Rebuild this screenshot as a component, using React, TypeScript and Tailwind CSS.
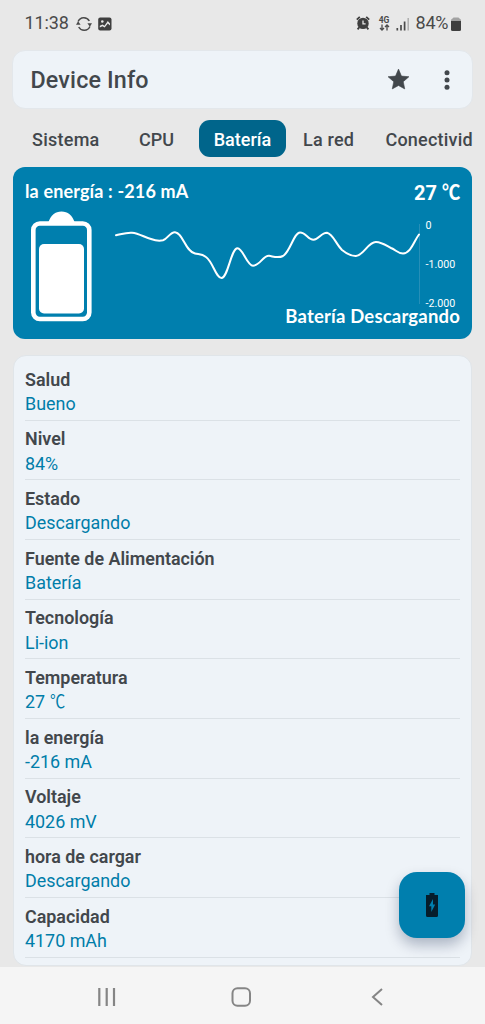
import React from "react";

const rows: [string, string][] = [
  ["Salud", "Bueno"],
  ["Nivel", "84%"],
  ["Estado", "Descargando"],
  ["Fuente de Alimentación", "Batería"],
  ["Tecnología", "Li-ion"],
  ["Temperatura", "27 ℃"],
  ["la energía", "-216 mA"],
  ["Voltaje", "4026 mV"],
  ["hora de cargar", "Descargando"],
  ["Capacidad", "4170 mAh"],
];

function StatusBar() {
  return (
    <div className="flex h-[46px] shrink-0 items-center pl-[24.500px] pr-[24px] text-[18px] text-[#4a4a4a]">
      <span className="mb-px w-[51px] whitespace-nowrap tracking-[-0.100px]">11:38</span>
      <svg className="mt-px h-4 w-4" viewBox="0 0 16 16" fill="none" stroke="#4a4a4a" strokeWidth="1.5">
        <path d="M2.100 5.500A6.200 6.200 0 0 1 13.300 5M13.900 10.500A6.200 6.200 0 0 1 2.700 11" />
        <path d="M0 8.800h4.600L2.100 5.200zM11.400 7.200H16L13.900 10.800z" fill="#4a4a4a" stroke="none" />
      </svg>
      <svg className="ml-[6px] mt-px h-[14px] w-[14px]" viewBox="0 0 14 14">
        <rect x="0.200" y="0.500" width="13.300" height="13" rx="2" fill="#3f3f3f" />
        <circle cx="4.300" cy="4.500" r="1.300" fill="#e8e8e8" />
        <path d="M1.800 8.800l2.700-1.300 2 1.200 3.300-4.700L12 6.500v2L9.800 6.500 6.700 10.500 4.400 9.200 1.800 10.600z" fill="#e8e8e8" />
      </svg>
      <div className="flex-1" />
      <svg className="mb-px h-[14px] w-[14px]" viewBox="0 0 14 14">
        <circle cx="7" cy="7.400" r="5.700" fill="#3f3f3f" />
        <path d="M0.800 3.600l3-2.800M13.200 3.600l-3-2.800M3.200 11.400L1.600 13.400M10.800 11.400l1.600 2" stroke="#3f3f3f" strokeWidth="1.800" />
        <path d="M7 4.500v3.300h2.600" fill="none" stroke="#e8e8e8" strokeWidth="1.300" />
      </svg>
      <div className="ml-[8px] flex w-[12px] flex-col items-center">
        <span className="text-[8.500px] font-bold leading-[8px]">4G</span>
        <svg className="h-[7px] w-[11px]" viewBox="0 0 11 7" fill="none" stroke="#4a4a4a" strokeWidth="1.300">
          <path d="M3 0.500v5M1 4l2 2 2-2M8 6.500v-5M6 3l2-2 2 2" />
        </svg>
      </div>
      <svg className="ml-[6px] mt-px h-[14px] w-[14px]" viewBox="0 0 14 14">
        <path d="M1.300 11v2.500M5 8v5.500M8.600 4.500v9" stroke="#4a4a4a" strokeWidth="1.700" />
        <path d="M12.200 1v12.500" stroke="#adadad" strokeWidth="1.500" />
      </svg>
      <span className="mb-px ml-[5.500px] w-[35.500px] whitespace-nowrap tracking-[-0.200px]">84%</span>
      <svg className="mt-px h-[14px] w-[10px]" viewBox="0 0 10 14">
        <path d="M0 3.500Q0 2 1.500 1.500L2.500 .5H7.500L8.500 1.500Q10 2 10 3.500V6H0z" fill="#a2a2a2" />
        <path d="M0 4h10v8.500Q10 14 8.500 14h-7Q0 14 0 12.500z" fill="#3f3f3f" />
      </svg>
    </div>
  );
}

function Header() {
  return (
    <header className="mx-3 mt-1 flex h-[59px] shrink-0 items-center rounded-[13px] border border-[#e3e7eb] bg-[#eef3f8] pl-[17.500px] pr-[18px] text-[#42474c]">
      <h1 className="mt-[2px] flex-1 text-[23.300px] font-medium tracking-[0.150px]">Device Info</h1>
      <svg className="h-[25px] w-[25px]" viewBox="0 0 24 24" fill="currentColor">
        <path d="M12 17.770l5.980 3.230-1.440-6.930L22 9.340l-7.190-.61L12 2 9.190 8.730 2 9.340l5.460 4.730L6.020 21z" stroke="currentColor" strokeWidth="0.600" strokeLinejoin="round" />
      </svg>
      <svg className="ml-[29.500px] h-5 w-[14px]" viewBox="0 0 14 20" fill="currentColor">
        <circle cx="7" cy="2.700" r="2.500" />
        <circle cx="7" cy="10" r="2.500" />
        <circle cx="7" cy="17.300" r="2.500" />
      </svg>
    </header>
  );
}

function Tabs() {
  return (
    <nav className="mr-[11px] mt-[11px] flex h-[37px] shrink-0 items-center overflow-hidden whitespace-nowrap text-[18px] font-medium leading-[22px] text-[#42474c]">
      <span className="ml-[32px] mt-[2px] w-[107px] tracking-[0.250px]">Sistema</span>
      <span className="mt-[2px] w-[60px]">CPU</span>
      <span className="flex h-[37px] w-[87px] items-center justify-center rounded-[11px] bg-[#00658b] pt-[2px] text-white">Batería</span>
      <span className="ml-[17px] mt-[2px] w-[82.500px] tracking-[0.200px]">La red</span>
      <span className="mt-[2px] tracking-[0.200px]">Conectivid</span>
    </nav>
  );
}

function BatteryCard() {
  return (
    <section className="mx-[13px] mt-[10px] flex h-[172px] shrink-0 flex-col rounded-[12px] bg-[#007fae] px-[12px] text-white">
      <div className="flex h-[44px] items-center justify-between">
        <span className="mt-[4px] font-[Lato] text-[18px] font-bold tracking-[0.140px]">la energía : -216 mA</span>
        <span className="mt-[7px] flex h-6 items-center gap-[5px] text-[20px] font-bold">
          <span>27</span>
          <span className="w-[18px] origin-left scale-x-[0.920]">℃</span>
        </span>
      </div>
      <div className="flex h-[93px]">
        <svg className="ml-[5px] h-[111px] w-[63px]" viewBox="0 0 63 111">
          <path d="M18 12C21 4 25 0.500 31.500 0.500S42 4 45 12z" fill="white" />
          <rect x="3.300" y="12.500" width="56" height="95.500" rx="6.500" fill="none" stroke="white" strokeWidth="4.600" />
          <rect x="9" y="33" width="45" height="69.500" rx="5" fill="white" />
        </svg>
        <svg className="ml-[16px] h-[93px] w-[312px]" viewBox="109 211 312 93" fill="none">
          <path d="M419.500 224v80" stroke="#268fb8" strokeWidth="1" />
          <path
            d="M116 235.300C122 234 126 232.300 132 232.700C139 233.200 145 237.600 151 239C155 240.500 159 241.200 163 240.300C168 238.500 170 232 175 232.200C183 232.800 185 251 195 253.500C199 254.500 202 254 206 257C213 262 216 278 221.500 278C228 278 231 248.300 237.500 248.300C243 248.300 247 265.700 253 265.700C260 265.700 263 255.500 269 255.800C274 256.600 278 258.500 283 256C290 252 294 232.500 300 232.500C306 232.500 308 239.700 313.500 239.700C319 239.700 321 232.700 327 232.800C333 234 336 244 342 250C347 254 351 256.200 356 256C364 255.500 368 241.700 376 242C382 242.200 387 246 391 248C396 250 398 253.500 403 253.500C411 253 414 241 419 234.500"
            stroke="white"
            strokeWidth="2"
            strokeLinecap="round"
            strokeLinejoin="round"
          />
        </svg>
        <div className="flex flex-col gap-[27px] whitespace-nowrap pl-[4.500px] pt-[9px] text-[10.700px] leading-[12px]">
          <span>0</span>
          <span>-1.000</span>
          <span>-2.000</span>
        </div>
      </div>
      <div className="mt-[2px] flex h-[22px] items-center justify-end font-[Lato] text-[18.500px] font-bold tracking-[0.180px]">Batería Descargando</div>
    </section>
  );
}

function DetailValue({ value }: { value: string }) {
  if (!value.endsWith("℃")) {
    return <span className="text-[#007da9]">{value}</span>;
  }
  return (
    <span className="flex h-[24.300px] gap-[4.500px] text-[#007da9]">
      <span>{value.replace(" ℃", "")}</span>
      <span className="origin-left scale-x-[0.850]">℃</span>
    </span>
  );
}

function DetailList() {
  return (
    <main className="mx-[13px] mt-[15.500px] h-[611.500px] shrink-0 overflow-hidden rounded-[13px] border border-[#e0e5e9] bg-[#eef3f8] px-[11px] pt-[5.500px]">
      {rows.map(([label, value]) => (
        <div key={label} className="flex h-[59.670px] flex-col border-b border-[#dbe1e6] pt-[6.800px] text-[17.900px] leading-[24.300px]">
          <span className="font-semibold text-[#42474c]">{label}</span>
          <DetailValue value={value} />
        </div>
      ))}
    </main>
  );
}

function NavigationBar() {
  return (
    <footer className="mt-px flex h-[57px] shrink-0 items-center bg-[#f5f5f5] pl-[96.500px]">
      <svg className="mt-[3px] h-5 w-[19px]" viewBox="0 0 19 20" stroke="#858585" strokeWidth="2.200">
        <path d="M2.300 1v18M9.700 1v18M17 1v18" />
      </svg>
      <svg className="ml-[115.500px] mt-[3px] h-5 w-5" viewBox="0 0 20 20" fill="none" stroke="#858585" strokeWidth="2">
        <rect x="1.500" y="1.200" width="17.500" height="17.500" rx="5" />
      </svg>
      <svg className="ml-[118px] mt-[3px] h-[18px] w-[18px]" viewBox="0 0 18 18" fill="none" stroke="#858585" strokeWidth="2">
        <path d="M13 1L4 9l9 8" />
      </svg>
    </footer>
  );
}

export default function App() {
  return (
    <div className="relative flex h-[1024px] w-[485px] flex-col overflow-hidden bg-[#e8e8e8] font-[Roboto,'Noto_Sans_CJK_SC',sans-serif]">
      <StatusBar />
      <Header />
      <Tabs />
      <BatteryCard />
      <DetailList />
      <NavigationBar />
      <button className="absolute left-[399px] top-[872px] flex h-[66px] w-[66px] items-center justify-center rounded-[18px] bg-[#007fae] shadow-[0_7px_14px_rgba(0,20,60,0.28)]">
        <svg className="h-6 w-[12px]" viewBox="0 0 12 24">
          <path d="M3.500 0h5v2H12v20.500Q12 24 10.500 24h-9Q0 24 0 22.500V2h3.500z" fill="#061d2b" />
          <path d="M7 6L3 13.300h2.300V19L9.200 11.500H7z" fill="#007fae" />
        </svg>
      </button>
    </div>
  );
}
